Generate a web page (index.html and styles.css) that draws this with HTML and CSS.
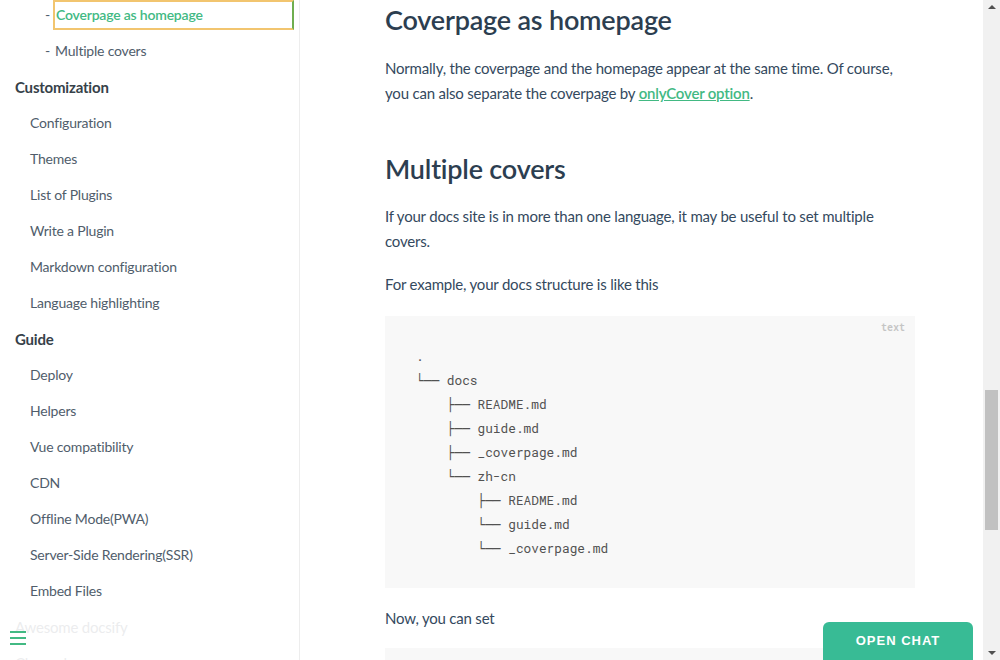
FILE: index.html
```html
<!DOCTYPE html>
<html lang="en">
<head>
<meta charset="utf-8">
<title>docsify - Cover</title>
<link rel="stylesheet" href="styles.css">
</head>
<body>
<div class="app">
  <aside class="sidebar">
    <ul class="nav">
      <li class="sub2 active"><span class="dash">-</span><a>Coverpage as homepage</a></li>
      <li class="sub2"><span class="dash">-</span><a>Multiple covers</a></li>
      <li class="head">Customization</li>
      <li class="sub"><a>Configuration</a></li>
      <li class="sub"><a>Themes</a></li>
      <li class="sub"><a>List of Plugins</a></li>
      <li class="sub"><a>Write a Plugin</a></li>
      <li class="sub"><a>Markdown configuration</a></li>
      <li class="sub"><a>Language highlighting</a></li>
      <li class="head">Guide</li>
      <li class="sub"><a>Deploy</a></li>
      <li class="sub"><a>Helpers</a></li>
      <li class="sub"><a>Vue compatibility</a></li>
      <li class="sub"><a>CDN</a></li>
      <li class="sub"><a>Offline Mode(PWA)</a></li>
      <li class="sub"><a>Server-Side Rendering(SSR)</a></li>
      <li class="sub"><a>Embed Files</a></li>
      <li class="head faded">Awesome docsify</li>
      <li class="head faded">Changelog</li>
    </ul>
    <div class="fade"></div>
    <button class="toggle" aria-label="Toggle sidebar">
      <span></span><span></span><span></span>
    </button>
  </aside>
  <main class="content">
    <article class="markdown">
      <h2>Coverpage as homepage</h2>
      <p>Normally, the coverpage and the homepage appear at the same time. Of course, you can also separate the coverpage by <a class="link">onlyCover option</a>.</p>
      <h2 class="second">Multiple covers</h2>
      <p>If your docs site is in more than one language, it may be useful to set multiple covers.</p>
      <p>For example, your docs structure is like this</p>
      <pre class="code" data-lang="text"><code>.
└── docs
    ├── README.md
    ├── guide.md
    ├── _coverpage.md
    └── zh-cn
        ├── README.md
        └── guide.md
        └── _coverpage.md</code></pre>
      <p class="after">Now, you can set</p>
      <pre class="code next"><code></code></pre>
    </article>
  </main>
  <div class="scrollbar">
    <span class="arrow up"></span>
    <div class="track"><div class="thumb"></div></div>
    <span class="arrow down"></span>
  </div>
</div>
<button class="chat">OPEN CHAT</button>
</body>
</html>
```
FILE: styles.css
```css
* { box-sizing: border-box; }
html, body { margin: 0; padding: 0; height: 100%; overflow: hidden; }
body {
  font-family: "Source Sans Pro", Lato, "Helvetica Neue", Arial, sans-serif;
  color: #34495e;
  background: #fff;
  letter-spacing: -0.2px;
  -webkit-font-smoothing: antialiased;
}
.app { display: flex; height: 660px; position: relative; }

/* sidebar */
.sidebar {
  width: 300px;
  flex: none;
  border-right: 1px solid rgba(0,0,0,.07);
  position: relative;
  overflow: hidden;
}
.nav { list-style: none; margin: 0; padding: 0 5px 0 15px; }
.nav li {
  height: 30px;
  line-height: 30px;
  margin-bottom: 6px;
  font-size: 14px;
  color: #505d6b;
  white-space: nowrap;
}
.nav li.head { font-size: 15px; font-weight: 700; color: #364149; }
.nav li.sub { padding-left: 15px; }
.nav li.sub2 { padding-left: 30px; display: flex; }
.nav .dash { width: 8px; color: #505d6b; }
.nav li.sub2 a { flex: 1; padding-left: 2px; }
.nav li.active a {
  color: #42b983;
  font-weight: 600;
  border: 2px solid #f2c56f;
  border-right-color: #6fae4f;
  line-height: 26px;
  padding-left: 1px;
}
.nav li.faded { color: #d4d6d9; font-weight: 400; }
.fade {
  position: absolute; left: 0; right: 1px; bottom: 0; height: 40px;
  background: rgba(255,255,255,.55);
}
.toggle {
  position: absolute; left: 10px; bottom: 15px;
  width: 16px; height: 14px; padding: 0; border: 0; background: transparent;
  display: flex; flex-direction: column; justify-content: space-between;
}
.toggle span { display: block; height: 2px; background: #42b983; }

/* main */
.content { flex: 1; min-width: 0; overflow: hidden; }
.markdown { width: 530px; margin-left: 85px; }
.markdown h2 {
  margin: 0;
  font-size: 27px;
  font-weight: 600;
  color: #2c3e50;
  line-height: 40px;
  height: 40px;
}
.markdown h2.second { margin-top: 43px; }
.markdown p {
  font-size: 15px;
  line-height: 25px;
  margin: 18px 0 0;
}
.markdown h2 + p { margin-top: 16px; }
.markdown h2.second + p { margin-top: 15px; }
.markdown p.after { margin-top: 18px; }
.link { color: #42b983; font-weight: 600; text-decoration: underline; }
.code {
  position: relative;
  background: #f8f8f8;
  margin: 19px 0 0;
  padding: 28px 31px 28px;
  font-family: "Roboto Mono", "DejaVu Sans Mono", "Liberation Mono", monospace;
  font-size: 12.8px;
  letter-spacing: 0;
  line-height: 24px;
  color: #525252;
}
.code code { font-family: inherit; }
.code::after {
  content: attr(data-lang);
  position: absolute; top: 0; right: 10px;
  font-size: 10px; font-weight: 600; color: #c5c5c5;
}
.code.next { height: 40px; margin-top: 17px; padding: 0; }

/* scrollbar */
.scrollbar {
  width: 17px; flex: none; background: #f1f1f1;
  display: flex; flex-direction: column; align-items: center;
}
.arrow { width: 0; height: 0; border-left: 4px solid transparent; border-right: 4px solid transparent; margin: 5px 0; }
.arrow.up { border-bottom: 4px solid #505050; }
.arrow.down { border-top: 4px solid #505050; }
.track { flex: 1; width: 100%; padding: 0 2px; }
.thumb { margin-top: 376px; height: 140px; background: #c1c1c1; }

/* chat */
.chat {
  position: absolute; left: 823px; top: 622px;
  width: 150px; height: 45px;
  border: 0; border-radius: 6px 6px 0 0;
  background: #38bb95; color: #fff;
  font-family: "Liberation Sans", Arial, sans-serif;
  font-size: 13px; font-weight: 700; letter-spacing: 1px;
  padding: 0 0 8px;
}
```
